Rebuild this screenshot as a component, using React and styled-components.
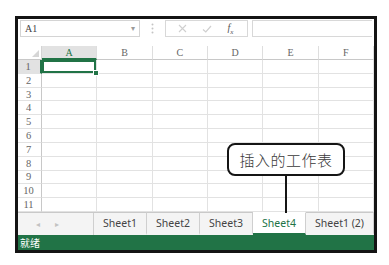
import React from 'react'
import styled, { createGlobalStyle } from 'styled-components'

const GlobalStyle = createGlobalStyle`
  html, body {
    margin: 0;
    padding: 0;
    background: #fff;
  }
  body {
    font-family: "Liberation Sans", "Noto Sans CJK SC", sans-serif;
  }
`

const columns = ['A', 'B', 'C', 'D', 'E', 'F']
const rows = [1, 2, 3, 4, 5, 6, 7, 8, 9, 10, 11]
const sheets = ['Sheet1', 'Sheet2', 'Sheet3', 'Sheet4', 'Sheet1 (2)']

export default function App() {
  return (
    <Page>
      <GlobalStyle />
      <Frame>
        <FormulaBar>
          <NameBox>
            <span>A1</span>
            <Caret>▾</Caret>
          </NameBox>
          <Dots>
            <svg width="3" height="11" viewBox="0 0 3 11">
              <circle cx="1.5" cy="1.5" r="1" fill="#c4c4c4" />
              <circle cx="1.5" cy="5.5" r="1" fill="#c4c4c4" />
              <circle cx="1.5" cy="9.5" r="1" fill="#c4c4c4" />
            </svg>
          </Dots>
          <FxButtons>
            <svg width="9" height="9" viewBox="0 0 9 9">
              <path d="M1 1 L8 8 M8 1 L1 8" stroke="#cfcfcf" strokeWidth="1.1" fill="none" />
            </svg>
            <svg width="10" height="8" viewBox="0 0 10 8">
              <path d="M1 4.5 L3.8 7 L9 1" stroke="#cfcfcf" strokeWidth="1.2" fill="none" />
            </svg>
            <FxLabel>
              f<sub>x</sub>
            </FxLabel>
          </FxButtons>
          <FormulaInput />
        </FormulaBar>

        <Grid>
          <Corner>
            <svg width="7" height="7" viewBox="0 0 7 7">
              <path d="M7 0 L7 7 L0 7 Z" fill="#d6d6d6" />
            </svg>
          </Corner>
          {columns.map((c, i) => (
            <ColHeader key={c} active={i === 0}>
              {c}
            </ColHeader>
          ))}
          {rows.map((r) => (
            <React.Fragment key={r}>
              <RowHeader active={r === 1}>{r}</RowHeader>
              {columns.map((c, i) => (
                <Cell key={c} selected={r === 1 && i === 0} />
              ))}
            </React.Fragment>
          ))}
        </Grid>

        <TabBar>
          <TabNav>
            <span>◂</span>
            <span>▸</span>
          </TabNav>
          {sheets.map((s) => (
            <Tab key={s} active={s === 'Sheet4'} wide={s === 'Sheet1 (2)'}>
              {s}
            </Tab>
          ))}
        </TabBar>

        <StatusBar>就绪</StatusBar>

        <Callout>
          <CalloutBox>插入的工作表</CalloutBox>
          <CalloutLine />
        </Callout>
      </Frame>
    </Page>
  )
}

const Page = styled.div`
  padding: 16px 0 0 15px;
`

const Frame = styled.div`
  position: relative;
  width: 356px;
  height: 231px;
  border: 3px solid #141414;
  display: flex;
  flex-direction: column;
  background: #fff;
`

const FormulaBar = styled.div`
  height: 27px;
  display: flex;
  align-items: flex-start;
  padding: 1px 2px 0 2px;
  box-sizing: border-box;
`

const NameBox = styled.div`
  width: 120px;
  height: 17px;
  box-sizing: border-box;
  border: 1px solid #d4d4d4;
  display: flex;
  align-items: center;
  justify-content: space-between;
  padding: 0 4px 0 4px;
  font-family: "Liberation Serif", serif;
  font-size: 10px;
  color: #444;
`

const Caret = styled.span`
  font-size: 8px;
  color: #9a9a9a;
`

const Dots = styled.div`
  width: 25px;
  height: 17px;
  display: flex;
  align-items: center;
  justify-content: center;
`

const FxButtons = styled.div`
  width: 83px;
  height: 17px;
  box-sizing: border-box;
  border: 1px solid #d8d8d8;
  display: flex;
  align-items: center;
  justify-content: space-around;
  padding: 0 6px 0 4px;
`

const FxLabel = styled.span`
  font-family: "Liberation Serif", serif;
  font-style: italic;
  font-size: 10px;
  color: #555;
  sub {
    font-size: 7px;
  }
`

const FormulaInput = styled.div`
  flex: 1;
  height: 17px;
  margin-left: 4px;
  box-sizing: border-box;
  border: 1px solid #d8d8d8;
  border-right: none;
`

const Grid = styled.div`
  display: grid;
  grid-template-columns: 24px repeat(6, 1fr);
  grid-template-rows: 14px repeat(11, 1fr);
  height: 166px;
  font-family: "Liberation Serif", serif;
  font-size: 10px;
  color: #666;
`

const Corner = styled.div`
  display: flex;
  align-items: flex-end;
  justify-content: flex-end;
  padding: 0 2px 2px 0;
  border-right: 1px solid #d4d4d4;
  border-bottom: 1px solid #c8c8c8;
`

const ColHeader = styled.div`
  display: flex;
  align-items: center;
  justify-content: center;
  background: ${(p) => (p.active ? '#e2e2e2' : '#fff')};
  border-right: 1px solid #dedede;
  border-bottom: ${(p) => (p.active ? '2px solid #217346' : '1px solid #c8c8c8')};
  color: ${(p) => (p.active ? '#217346' : '#666')};
`

const RowHeader = styled.div`
  display: flex;
  align-items: center;
  justify-content: center;
  padding-right: 2px;
  background: ${(p) => (p.active ? '#e2e2e2' : '#fff')};
  border-right: ${(p) => (p.active ? '2px solid #217346' : '1px solid #c8c8c8')};
  border-bottom: 1px solid #e2e2e2;
  font-family: "Liberation Serif", serif;
  font-size: 10.5px;
`

const Cell = styled.div`
  position: relative;
  z-index: ${(p) => (p.selected ? 1 : 0)};
  border-right: 1px solid #e2e2e2;
  border-bottom: 1px solid #e2e2e2;
  box-shadow: ${(p) => (p.selected ? 'inset 0 0 0 2px #217346' : 'none')};
  &::after {
    content: '';
    display: ${(p) => (p.selected ? 'block' : 'none')};
    position: absolute;
    right: -3px;
    bottom: -3px;
    width: 6px;
    height: 6px;
    background: #217346;
    border: 1px solid #fff;
    box-sizing: border-box;
  }
`

const TabBar = styled.div`
  height: 23px;
  display: flex;
  background: #f4f4f4;
  border-top: 1px solid #c9c9c9;
  box-sizing: border-box;
`

const TabNav = styled.div`
  width: 76px;
  display: flex;
  align-items: center;
  gap: 15px;
  padding-left: 18px;
  box-sizing: border-box;
  font-size: 8px;
  color: #c2c2c2;
  border-right: 1px solid #cfcfcf;
`

const Tab = styled.div`
  ${(p) => (p.wide ? 'flex: 1;' : 'width: 53px;')}
  display: flex;
  align-items: center;
  justify-content: center;
  box-sizing: border-box;
  margin-top: -1px;
  font-family: "Noto Sans", sans-serif;
  font-size: 10.5px;
  color: ${(p) => (p.active ? '#217346' : '#444')};
  background: ${(p) => (p.active ? '#fff' : 'transparent')};
  border-right: 1px solid #cfcfcf;
  border-bottom: ${(p) => (p.active ? '2px solid #217346' : '2px solid transparent')};
  border-top: 1px solid ${(p) => (p.active ? '#fff' : '#c9c9c9')};
`

const StatusBar = styled.div`
  height: 15px;
  background: #217346;
  color: #fff;
  font-family: "Noto Sans CJK SC", sans-serif;
  font-size: 10px;
  line-height: 15px;
  padding-left: 2px;
`

const Callout = styled.div`
  position: absolute;
  z-index: 2;
  left: 209px;
  top: 124px;
  display: flex;
  flex-direction: column;
  align-items: center;
`

const CalloutBox = styled.div`
  width: 118px;
  height: 33px;
  box-sizing: border-box;
  border: 2px solid #151515;
  border-radius: 8px;
  background: #fff;
  display: flex;
  align-items: center;
  justify-content: center;
  font-family: "Noto Sans CJK SC", sans-serif;
  font-weight: 300;
  font-size: 15px;
  color: #3a3a3a;
  letter-spacing: 0.5px;
`

const CalloutLine = styled.div`
  width: 2px;
  height: 37px;
  background: #151515;
`
